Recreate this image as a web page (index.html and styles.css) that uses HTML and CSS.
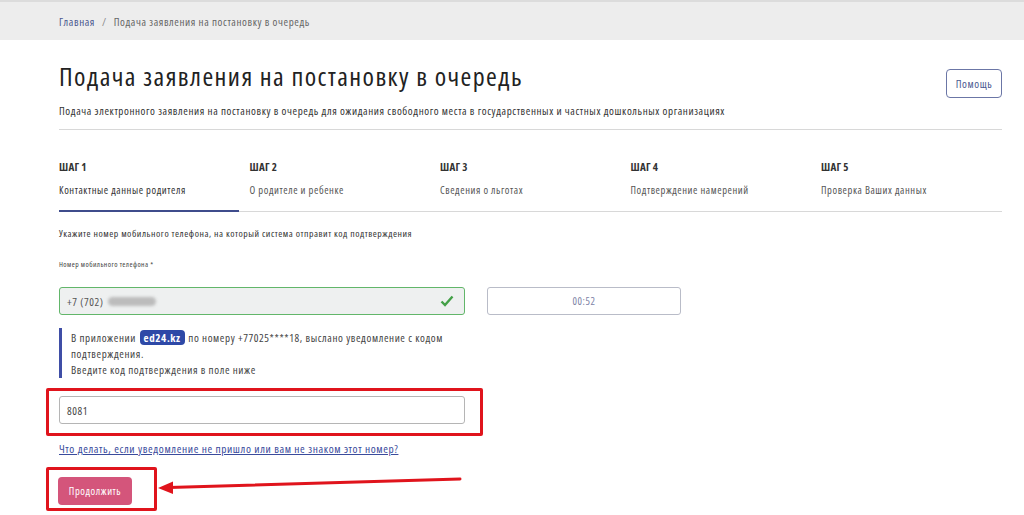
FILE: index.html
```html
<!DOCTYPE html>
<html lang="ru">
<head>
<meta charset="utf-8">
<link rel="stylesheet" href="styles.css">
</head>
<body>
<div class="crumbs">
  <a class="crumb-link" href="#">Главная</a>
  <span class="crumb-sep">/</span>
  <span class="crumb-cur">Подача заявления на постановку в очередь</span>
</div>
<main class="page">
  <header class="head">
    <div class="head-text">
      <h1 class="title">Подача заявления на постановку в очередь</h1>
      <p class="subtitle">Подача электронного заявления на постановку в очередь для ожидания свободного места в государственных и частных дошкольных организациях</p>
    </div>
    <button class="help">Помощь</button>
  </header>
  <nav class="steps">
    <div class="step active"><div class="step-num">ШАГ 1</div><div class="step-name">Контактные данные родителя</div></div>
    <div class="step"><div class="step-num">ШАГ 2</div><div class="step-name">О родителе и ребенке</div></div>
    <div class="step"><div class="step-num">ШАГ 3</div><div class="step-name">Сведения о льготах</div></div>
    <div class="step"><div class="step-num">ШАГ 4</div><div class="step-name">Подтверждение намерений</div></div>
    <div class="step"><div class="step-num">ШАГ 5</div><div class="step-name">Проверка Ваших данных</div></div>
  </nav>
  <p class="hint">Укажите номер мобильного телефона, на который система отправит код подтверждения</p>
  <label class="label">Номер мобильного телефона *</label>
  <div class="phone-row">
    <div class="phone">
      <span class="phone-val">+7 (702)</span><span class="blur"></span>
      <svg class="check" width="14" height="12" viewBox="0 0 14 12"><path d="M1.5 6.5 L5 10 L12.5 1.5" fill="none" stroke="#43a047" stroke-width="2.4"/></svg>
    </div>
    <div class="timer">00:52</div>
  </div>
  <div class="info">
    <p>В приложении <span class="badge">ed24.kz</span> по номеру +77025****18, выслано уведомление с кодом подтверждения.</p>
    <p>Введите код подтверждения в поле ниже</p>
  </div>
  <div class="mark mark-code">
    <div class="code">8081</div>
  </div>
  <a class="help-link" href="#">Что делать, если уведомление не пришло или вам не знаком этот номер?</a>
  <div class="submit-row">
    <div class="mark mark-btn">
      <button class="next">Продолжить</button>
    </div>
    <svg class="arrow" width="305" height="20" viewBox="0 0 305 20"><path d="M303 2 L12 10.5" stroke="#e0141c" stroke-width="3" stroke-linecap="round" fill="none"/><path d="M1 11 L16 4.5 L16 17 Z" fill="#e0141c"/></svg>
  </div>
</main>
</body>
</html>
```
FILE: styles.css
```css
* { box-sizing: border-box; letter-spacing: 0.055em; }
body { margin: 0; background: #fff; font-family: "Open Sans", "Noto Sans", sans-serif; font-stretch: 75%; color: #333; }
.crumbs { height: 40px; background: #ededed; border-top: 2px solid #dcdcdc; padding-left: 59px; display: flex; align-items: center; gap: 5px; font-size: 11px; }
.crumb-link { color: #4a578f; text-decoration: none; }
.crumb-sep { color: #888; margin: 0 2px; }
.crumb-cur { color: #666; }
.page { padding: 0 22px 0 59px; }
.head { display: flex; justify-content: space-between; align-items: flex-start; border-bottom: 1px solid #d8d8d8; padding-top: 18px; height: 90px; }
.title { margin: 0; font-weight: 400; font-size: 26px; color: #222; line-height: 36px; }
.subtitle { margin: 9px 0 0; font-size: 11px; color: #333; }
.help { margin-top: 11px; width: 56px; height: 29px; border: 1px solid #6b76a6; border-radius: 4px; background: #fff; color: #4a578f; font: 11px "Open Sans", sans-serif; font-stretch: 75%; padding: 0; }
.steps { display: grid; grid-template-columns: repeat(5, 180px); column-gap: 10.5px; border-bottom: 1px solid #d8d8d8; padding-top: 29px; }
.step { padding-bottom: 13px; border-bottom: 2px solid transparent; margin-bottom: -1px; }
.step.active { border-bottom-color: #3f4c8c; }
.step-num { font-weight: 700; font-size: 11px; letter-spacing: 0.02em; color: #333; }
.step-name { margin-top: 9px; font-size: 10.5px; color: #555; }
.step.active .step-name { color: #333; }
.hint { margin: 15px 0 0; font-size: 9.75px; color: #333; }
.label { display: block; margin-top: 19px; font-size: 7.5px; color: #444; }
.phone-row { display: flex; gap: 22px; margin-top: 18px; }
.phone { width: 406px; height: 28px; border: 1px solid #62b66a; border-radius: 3px; background: #eef0f0; display: flex; align-items: center; padding: 0 10px 0 7px; font-size: 11px; color: #555; }
.blur { width: 48px; height: 9px; border-radius: 5px; background: #bcbcbc; margin-left: 4px; filter: blur(1.5px); }
.check { margin-left: auto; }
.timer { width: 194px; height: 28px; border: 1px solid #b9bcc8; border-radius: 3px; display: flex; align-items: center; justify-content: center; font-size: 10.5px; color: #7c82a6; }
.info { margin-top: 13px; border-left: 3px solid #3f4ea6; padding: 2px 0 0 9px; width: 406px; font-size: 11px; color: #444; line-height: 16px; }
.info p { margin: 0; }
.badge { display: inline-block; background: #2e49a7; color: #fff; font-weight: 700; border-radius: 4px; padding: 0 4px; margin: 0 1px; line-height: 15px; }
.mark { border: 3px solid #e0141c; border-radius: 2px; }
.mark-code { margin: 10px 0 0 -13px; width: 437px; padding: 5px 15px 9px 10px; }
.code { height: 28px; border: 1px solid #b5b5b5; border-radius: 3px; display: flex; align-items: center; padding-left: 7px; font-size: 11px; color: #444; }
.help-link { display: inline-block; margin-top: 3px; font-size: 11.3px; color: #3a4b9c; text-decoration: underline; }
.submit-row { display: flex; align-items: flex-start; margin-top: 9px; position: relative; }
.mark-btn { margin-left: -13px; padding: 7px 22px 3px 9px; }
.next { width: 74px; height: 28px; border: none; border-radius: 4px; background: #d4557b; color: #fff; font: 10.5px "Open Sans", sans-serif; font-stretch: 75%; padding: 0; }
.arrow { position: absolute; left: 98px; top: 10px; }
```
